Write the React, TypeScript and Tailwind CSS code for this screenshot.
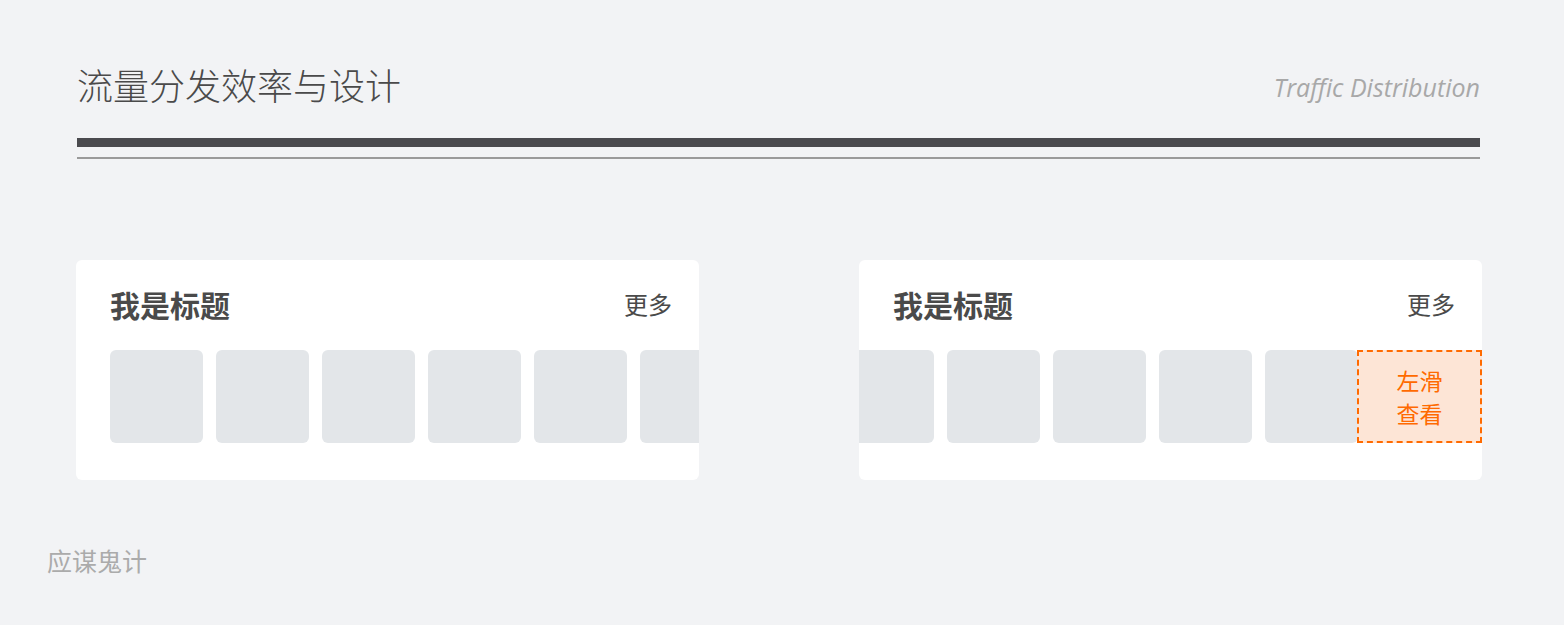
import React from "react";

const cjk = "font-['Noto_Sans_CJK_SC',sans-serif]";

// Grey placeholder square used in the horizontal strip
const Tile: React.FC = () => (
  <div className="w-[93px] h-[93px] shrink-0 rounded-[6px] bg-[#e3e6e9]" />
);

type CardProps = {
  offset?: number;
  showHint?: boolean;
};

const ScrollCard: React.FC<CardProps> = ({ offset = 0, showHint = false }) => {
  return (
    <div className="relative w-[623px] h-[220px] rounded-[6px] bg-white overflow-hidden">
      {/* Header */}
      <div className="flex items-center justify-between pl-[34px] pr-[27px] pt-[29px] h-[59px]">
        <span className={`${cjk} text-[30px] leading-[30px] font-semibold text-[#4a4a4a]`}>
          我是标题
        </span>
        <span className={`${cjk} text-[24px] leading-[30px] text-[#4a4a4a]`}>更多</span>
      </div>

      {/* Tile strip */}
      <div className="mt-[31px] overflow-hidden">
        <div className="flex gap-[13px]" style={{ marginLeft: 34 - offset }}>
          {Array.from({ length: 6 }).map((_, i) => (
            <Tile key={i} />
          ))}
        </div>
      </div>

      {showHint && (
        <div className="absolute right-0 top-[90px] w-[125px] h-[93px] flex flex-col items-center justify-center border-2 border-dashed border-[#ff6a00] bg-[#fde5d6]">
          <span className={`${cjk} block text-[23px] leading-[33px] text-[#ff6a00]`}>左滑</span>
          <span className={`${cjk} block text-[23px] leading-[33px] text-[#ff6a00]`}>查看</span>
        </div>
      )}
    </div>
  );
};

export default function App() {
  return (
    <div className="w-[1564px] h-[625px] bg-[#f2f3f5] overflow-hidden">
      {/* Page heading */}
      <div className="pl-[77px] pr-[84px] pt-[60px]">
        <div className="flex items-end justify-between h-[48px]">
          <h1 className={`${cjk} text-[36px] leading-[48px] font-light text-[#4a4a4a]`}>
            流量分发效率与设计
          </h1>
          <span className="font-['Open_Sans',sans-serif] italic text-[25px] leading-[48px] text-[#a8a8a8] -mb-[3px]">
            Traffic Distribution
          </span>
        </div>
        <div className="mt-[30px] h-[9px] bg-[#4a4a4e]" />
        <div className="mt-[10px] h-[2px] bg-[#9a9a9a]" />
      </div>

      {/* Card row */}
      <div className="flex justify-between pl-[76px] pr-[82px] mt-[101px]">
        <ScrollCard />
        <ScrollCard offset={52} showHint />
      </div>

      <div className={`${cjk} pl-[47px] mt-[64px] text-[25px] leading-[32px] text-[#ababab]`}>
        应谋鬼计
      </div>
    </div>
  );
}
